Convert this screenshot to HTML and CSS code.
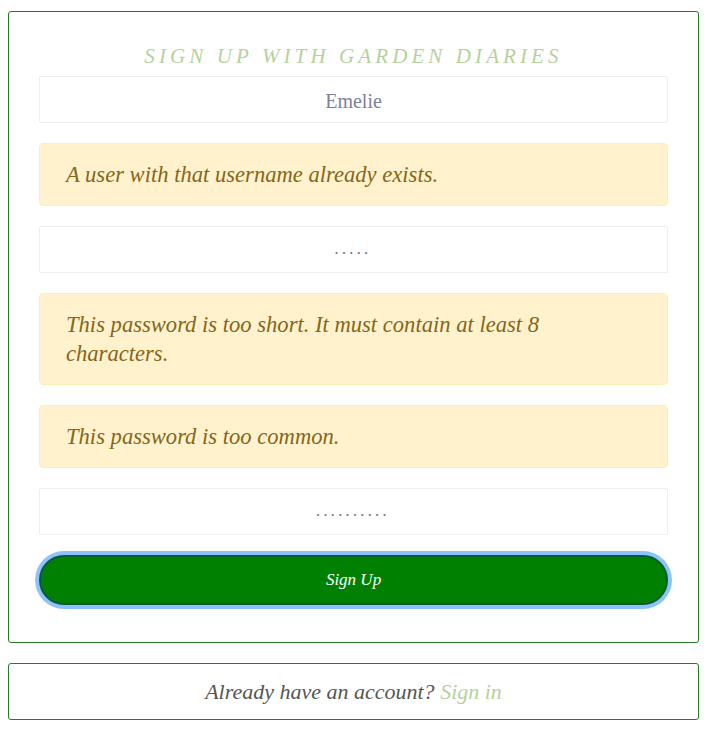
FILE: index.html
```html
<!DOCTYPE html>
<html lang="en">
<head>
<meta charset="utf-8">
<title>Sign up - Garden Diaries</title>
<link rel="stylesheet" href="styles.css">
</head>
<body>
<main class="page">
  <form class="card signup">
    <h1 class="title">Sign up with Garden Diaries</h1>
    <input class="field" type="text" value="Emelie" aria-label="Username">
    <div class="alert">A user with that username already exists.</div>
    <input class="field pw" type="password" value="12345" aria-label="Password">
    <div class="alert">This password is too short. It must contain at least 8 characters.</div>
    <div class="alert">This password is too common.</div>
    <input class="field pw" type="password" value="1234567890" aria-label="Confirm password">
    <button class="btn" type="submit">Sign Up</button>
  </form>
  <div class="card footer">
    <p>Already have an account? <a href="#">Sign in</a></p>
  </div>
</main>
</body>
</html>
```
FILE: styles.css
```css
* { box-sizing: border-box; }
html, body { margin: 0; background: #fff; }
body {
  font-family: "Liberation Serif", "DejaVu Serif", serif;
  color: #555;
}
.page {
  padding: 11px 12px 0 8px;
  display: flex;
  flex-direction: column;
  gap: 20px;
}
.card {
  border: 1px solid #267a26;
  border-radius: 3px;
  background: #fff;
}
.signup {
  padding: 32px 30px 37px 30px;
  display: flex;
  flex-direction: column;
  gap: 20px;
}
.title {
  margin: 0 0 -12px;
  text-align: center;
  font-style: italic;
  font-weight: normal;
  font-size: 21px;
  line-height: 24px;
  letter-spacing: 4.1px;
  text-transform: uppercase;
  color: #b6d19c;
}
.field {
  display: block;
  width: 100%;
  height: 47px;
  border: 1px solid #eeeeee;
  border-radius: 2px;
  background: #fff;
  text-align: center;
  font-family: inherit;
  font-size: 20px;
  color: #7c809b;
  outline: none;
  padding: 3px 12px 0;
}
.field.pw {
  font-size: 8.5px;
  letter-spacing: 4.4px;
  padding-top: 7px;
  color: #6f7390;
}
.alert {
  background: #fff2cc;
  border: 1px solid #ffedb8;
  border-radius: 4px;
  color: #85661a;
  font-style: italic;
  font-size: 22.6px;
  line-height: 29px;
  padding: 16px 50px 16px 26px;
}
.btn {
  display: block;
  width: 100%;
  height: 50px;
  border: 2px solid #0a5a3a;
  border-radius: 25px;
  background: #008000;
  color: #fff;
  font-family: inherit;
  font-style: italic;
  font-size: 17px;
  box-shadow: 0 0 0 4px #8cc3fa;
}
.footer {
  height: 57px;
  display: flex;
  align-items: center;
  justify-content: center;
}
.footer p {
  margin: 0;
  font-style: italic;
  font-size: 22px;
  color: #555;
}
.footer a {
  color: #b6d19c;
  text-decoration: none;
}
```
